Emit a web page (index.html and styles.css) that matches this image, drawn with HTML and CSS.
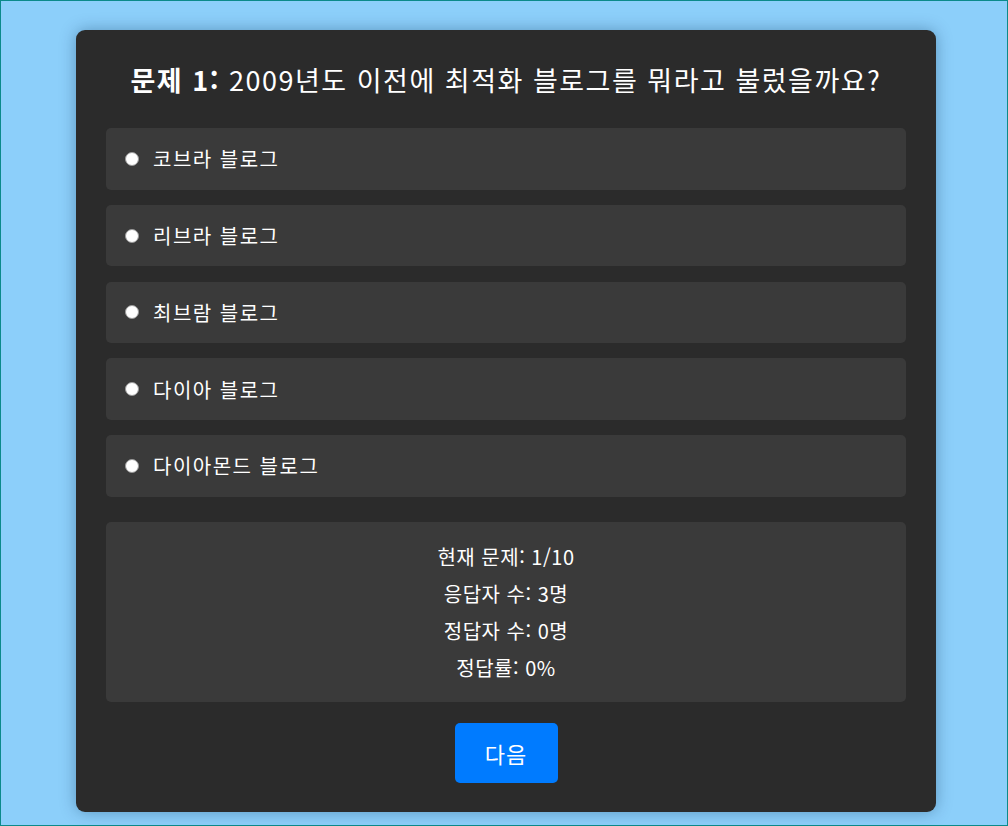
FILE: index.html
```html
<!DOCTYPE html>
<html lang="ko">
<head>
<meta charset="utf-8">
<link rel="stylesheet" href="styles.css">
</head>
<body>
<div class="page">
  <div class="card">
    <h1 class="title"><strong>문제 1:</strong> 2009년도 이전에 최적화 블로그를 뭐라고 불렀을까요?</h1>
    <ul class="options">
      <li class="option"><span class="radio"></span>코브라 블로그</li>
      <li class="option"><span class="radio"></span>리브라 블로그</li>
      <li class="option"><span class="radio"></span>최브람 블로그</li>
      <li class="option"><span class="radio"></span>다이아 블로그</li>
      <li class="option"><span class="radio"></span>다이아몬드 블로그</li>
    </ul>
    <div class="stats">
      <p>현재 문제: 1/10</p>
      <p>응답자 수: 3명</p>
      <p>정답자 수: 0명</p>
      <p>정답률: 0%</p>
    </div>
    <div class="actions"><button class="next">다음</button></div>
  </div>
</div>
</body>
</html>
```

FILE: styles.css
```css
html, body {
  margin: 0;
  padding: 0;
}
body {
  font-family: "Noto Sans CJK KR", "Noto Sans", sans-serif;
  background: #8ccffa;
  color: #ffffff;
}
.page {
  box-sizing: border-box;
  height: 826px;
  border: 1px solid #0b8a8a;
  padding: 29px 0 0 4px;
  display: flex;
  justify-content: center;
}
.card {
  box-sizing: border-box;
  width: 860px;
  height: 782px;
  background: #2b2b2b;
  border-radius: 9px;
  box-shadow: 0 0 16px rgba(0, 40, 80, 0.35);
  padding: 30px;
}
.title {
  margin: 0 0 28px;
  font-size: 27px;
  letter-spacing: 1.5px;
  line-height: 40px;
  font-weight: 400;
  text-align: center;
}
.title strong {
  font-weight: 700;
}
.options {
  list-style: none;
  margin: 0;
  padding: 0;
  display: flex;
  flex-direction: column;
  gap: 15.25px;
}
.option {
  height: 61.5px;
  box-sizing: border-box;
  background: #3a3a3a;
  border-radius: 5px;
  display: flex;
  align-items: center;
  padding-left: 19px;
  font-size: 20px;
  letter-spacing: 1.5px;
}
.radio {
  width: 12px;
  height: 12px;
  border-radius: 50%;
  background: #ffffff;
  border: 1px solid #9a9a9a;
  margin-right: 14px;
}
.stats {
  margin-top: 25px;
  background: #3a3a3a;
  border-radius: 5px;
  padding: 16px 0 16px;
  text-align: center;
  font-size: 20px;
  letter-spacing: 0.5px;
}
.stats p {
  margin: 0;
  line-height: 37px;
}
.actions {
  display: flex;
  justify-content: center;
  margin-top: 21px;
}
.next {
  width: 103px;
  height: 60px;
  background: #007bff;
  color: #ffffff;
  border: none;
  border-radius: 5px;
  font-family: inherit;
  font-size: 22px;
  letter-spacing: 1px;
}
```
